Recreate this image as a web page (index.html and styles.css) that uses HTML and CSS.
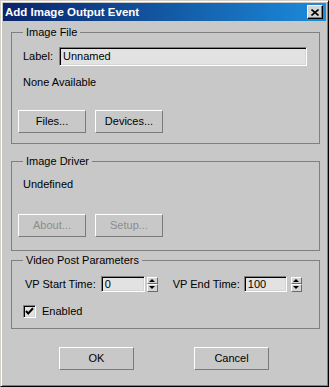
FILE: index.html
```html
<!DOCTYPE html>
<html lang="en">
<head>
  <meta charset="UTF-8">
  <title>Add Image Output Event</title>
  <link rel="stylesheet" href="styles.css">
</head>
<body>
  <div class="window">
    <div class="titlebar">
      <span class="title">Add Image Output Event</span>
      <button class="close-btn" aria-label="Close">
        <svg width="8" height="7" viewBox="0 0 8 7">
          <path d="M0.5 0.5 L7.5 6.5 M7.5 0.5 L0.5 6.5" stroke="#000" stroke-width="1.6" fill="none"/>
        </svg>
      </button>
    </div>

    <div class="content">
      <fieldset class="group group-file">
        <legend>Image File</legend>
        <div class="label-row">
          <span class="label">Label:</span>
          <div class="edit edit-label">Unnamed</div>
        </div>
        <div class="text-line">None Available</div>
        <div class="btn-row">
          <button class="btn">Files...</button>
          <button class="btn">Devices...</button>
        </div>
      </fieldset>

      <fieldset class="group group-driver">
        <legend>Image Driver</legend>
        <div class="text-line">Undefined</div>
        <div class="btn-row">
          <button class="btn" disabled>About...</button>
          <button class="btn" disabled>Setup...</button>
        </div>
      </fieldset>

      <fieldset class="group group-vp">
        <legend>Video Post Parameters</legend>
        <div class="time-row">
          <span class="time-label">VP Start Time:</span>
          <div class="edit edit-time">0</div>
          <div class="spin"><span class="up"></span><span class="down"></span></div>
          <span class="time-label end-label">VP End Time:</span>
          <div class="edit edit-time end-edit">100</div>
          <div class="spin end-spin"><span class="up"></span><span class="down"></span></div>
        </div>
        <label class="check-row">
          <span class="checkbox">
            <svg width="9" height="9" viewBox="0 0 9 9">
              <path d="M1 4 L3.2 6.4 L8 1.2" stroke="#000" stroke-width="2" fill="none"/>
            </svg>
          </span>
          <span>Enabled</span>
        </label>
      </fieldset>

      <div class="footer">
        <button class="btn btn-wide">OK</button>
        <button class="btn btn-wide">Cancel</button>
      </div>
    </div>
  </div>
</body>
</html>
```

FILE: styles.css
```css
* {
  box-sizing: border-box;
}

body {
  margin: 0;
  background: #c8c8c8;
  font-family: 'Liberation Sans', Arial, sans-serif;
  font-size: 11px;
  line-height: 13px;
  color: #000;
}

.window {
  width: 329px;
  height: 387px;
  background: #c8c8c8;
  border: 1px solid;
  border-color: #d4d0c8 #000 #000 #d4d0c8;
  box-shadow: inset 1px 1px 0 #fff, inset -1px -1px 0 #808080;
  padding: 2px;
  display: flex;
  flex-direction: column;
}

.titlebar {
  height: 18px;
  flex-shrink: 0;
  display: flex;
  align-items: center;
  justify-content: space-between;
  padding: 0 3px 0 2px;
  background: linear-gradient(90deg, #0a246a 0%, #1c8cdc 100%);
  color: #fff;
}

.title {
  font-weight: bold;
  font-size: 11.5px;
}

.close-btn {
  width: 16px;
  height: 14px;
  padding: 0;
  margin: 0;
  background: #d4d4d4;
  border: 1px solid;
  border-color: #fff #000 #000 #fff;
  box-shadow: inset -1px -1px 0 #808080;
  display: flex;
  align-items: center;
  justify-content: center;
}

.content {
  display: flex;
  flex-direction: column;
  padding: 0 6px 0 8px;
}

.group {
  margin: 0;
  border: 1px solid #808080;
  padding: 0 6px;
  min-width: 0;
}

.group legend {
  margin-left: 5px;
  padding: 0 3px;
  line-height: 13px;
}

.group-file {
  margin-top: 5px;
  padding-top: 8px;
  padding-bottom: 10px;
}

.group-driver {
  margin-top: 11px;
  padding-top: 10px;
  padding-bottom: 13px;
}

.group-vp {
  margin-top: 3px;
  padding-top: 9px;
  padding-bottom: 10px;
}

.label-row {
  display: flex;
  align-items: center;
  padding-left: 5px;
}

.label {
  flex: none;
  width: 36px;
}

.edit {
  flex: none;
  background: #e2e2e2;
  border: 1px solid;
  border-color: #808080 #fff #fff #808080;
  box-shadow: inset 1px 1px 0 #000, inset -1px -1px 0 #d4d4d4;
  padding: 0 3px;
  display: flex;
  align-items: center;
}

.edit-label {
  width: 248px;
  height: 19px;
}

.text-line {
  padding-left: 5px;
  margin-top: 10px;
}

.group-driver .text-line {
  margin-top: 0;
}

.btn-row {
  display: flex;
  gap: 9px;
  margin-top: 21px;
}

.group-driver .btn-row {
  margin-top: 23px;
}

.btn {
  width: 68px;
  height: 23px;
  padding: 0;
  font: inherit;
  color: #000;
  background: #c8c8c8;
  border: 1px solid;
  border-color: #fff #7a7a7a #7a7a7a #fff;
}

.btn:disabled {
  color: #8c8c8c;
}

.time-row {
  display: flex;
  align-items: center;
  padding-left: 7px;
}

.time-label {
  flex: none;
  margin-right: 5px;
}

.end-label {
  margin-left: 15px;
  margin-right: 4px;
}

.edit-time {
  width: 44px;
  height: 16px;
  padding-left: 3px;
}

.end-edit {
  width: 43px;
}

.spin {
  flex: none;
  width: 11px;
  height: 15px;
  margin-left: 2px;
  display: flex;
  flex-direction: column;
}

.end-spin {
  margin-left: 4px;
}

.spin span {
  flex: 1;
  display: flex;
  align-items: center;
  justify-content: center;
  background: #d4d4d4;
  border: 1px solid;
  border-color: #fff #6a6a6a #6a6a6a #fff;
}

.spin .up::after {
  content: '';
  border-left: 3px solid transparent;
  border-right: 3px solid transparent;
  border-bottom: 3px solid #000;
}

.spin .down::after {
  content: '';
  border-left: 3px solid transparent;
  border-right: 3px solid transparent;
  border-top: 3px solid #000;
}

.check-row {
  display: flex;
  align-items: center;
  gap: 6px;
  margin-top: 13px;
  padding-left: 5px;
}

.checkbox {
  flex: none;
  width: 13px;
  height: 13px;
  background: #e2e2e2;
  border: 1px solid;
  border-color: #808080 #fff #fff #808080;
  box-shadow: inset 1px 1px 0 #000, inset -1px -1px 0 #d4d4d4;
  display: flex;
  align-items: center;
  justify-content: center;
}

.footer {
  display: flex;
  gap: 60px;
  margin-top: 18px;
  padding-left: 48px;
}

.btn-wide {
  width: 75px;
  height: 23px;
}
```
